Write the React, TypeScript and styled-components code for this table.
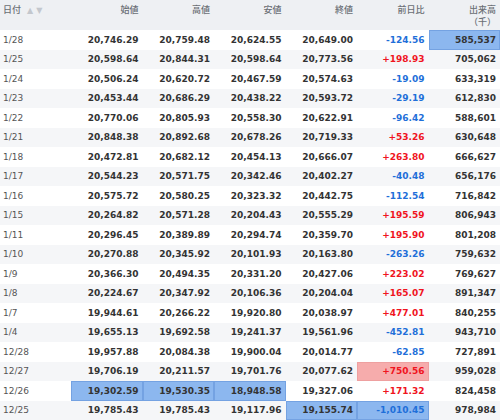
import React from 'react';
import styled, { createGlobalStyle } from 'styled-components';

type Hl = 'blue' | 'red' | undefined;

type Row = {
  date: string;
  open: string;
  high: string;
  low: string;
  close: string;
  change: string;
  volume: string;
  hl?: Partial<Record<'open' | 'high' | 'low' | 'close' | 'change' | 'volume', Hl>>;
};

const rows: Row[] = [
  { date: '1/28', open: '20,746.29', high: '20,759.48', low: '20,624.55', close: '20,649.00', change: '-124.56', volume: '585,537', hl: { volume: 'blue' } },
  { date: '1/25', open: '20,598.64', high: '20,844.31', low: '20,598.64', close: '20,773.56', change: '+198.93', volume: '705,062' },
  { date: '1/24', open: '20,506.24', high: '20,620.72', low: '20,467.59', close: '20,574.63', change: '-19.09', volume: '633,319' },
  { date: '1/23', open: '20,453.44', high: '20,686.29', low: '20,438.22', close: '20,593.72', change: '-29.19', volume: '612,830' },
  { date: '1/22', open: '20,770.06', high: '20,805.93', low: '20,558.30', close: '20,622.91', change: '-96.42', volume: '588,601' },
  { date: '1/21', open: '20,848.38', high: '20,892.68', low: '20,678.26', close: '20,719.33', change: '+53.26', volume: '630,648' },
  { date: '1/18', open: '20,472.81', high: '20,682.12', low: '20,454.13', close: '20,666.07', change: '+263.80', volume: '666,627' },
  { date: '1/17', open: '20,544.23', high: '20,571.75', low: '20,342.46', close: '20,402.27', change: '-40.48', volume: '656,176' },
  { date: '1/16', open: '20,575.72', high: '20,580.25', low: '20,323.32', close: '20,442.75', change: '-112.54', volume: '716,842' },
  { date: '1/15', open: '20,264.82', high: '20,571.28', low: '20,204.43', close: '20,555.29', change: '+195.59', volume: '806,943' },
  { date: '1/11', open: '20,296.45', high: '20,389.89', low: '20,294.74', close: '20,359.70', change: '+195.90', volume: '801,208' },
  { date: '1/10', open: '20,270.88', high: '20,345.92', low: '20,101.93', close: '20,163.80', change: '-263.26', volume: '759,632' },
  { date: '1/9', open: '20,366.30', high: '20,494.35', low: '20,331.20', close: '20,427.06', change: '+223.02', volume: '769,627' },
  { date: '1/8', open: '20,224.67', high: '20,347.92', low: '20,106.36', close: '20,204.04', change: '+165.07', volume: '891,347' },
  { date: '1/7', open: '19,944.61', high: '20,266.22', low: '19,920.80', close: '20,038.97', change: '+477.01', volume: '840,255' },
  { date: '1/4', open: '19,655.13', high: '19,692.58', low: '19,241.37', close: '19,561.96', change: '-452.81', volume: '943,710' },
  { date: '12/28', open: '19,957.88', high: '20,084.38', low: '19,900.04', close: '20,014.77', change: '-62.85', volume: '727,891' },
  { date: '12/27', open: '19,706.19', high: '20,211.57', low: '19,701.76', close: '20,077.62', change: '+750.56', volume: '959,028', hl: { change: 'red' } },
  { date: '12/26', open: '19,302.59', high: '19,530.35', low: '18,948.58', close: '19,327.06', change: '+171.32', volume: '824,458', hl: { open: 'blue', high: 'blue', low: 'blue' } },
  { date: '12/25', open: '19,785.43', high: '19,785.43', low: '19,117.96', close: '19,155.74', change: '-1,010.45', volume: '978,984', hl: { close: 'blue', change: 'blue' } },
];

const GlobalStyle = createGlobalStyle`
  html, body {
    margin: 0;
    padding: 0;
    background: #ffffff;
    overflow: hidden;
  }
  body {
    font-family: "DejaVu Sans", Verdana, "Noto Sans CJK JP", sans-serif;
  }
`;

const Table = styled.div`
  width: 500px;
  height: 420px;
  display: grid;
  grid-template-columns: 71px repeat(6, 1fr);
  grid-template-rows: 30px repeat(20, 19.5px);
  color: #333;
`;

const HeadCell = styled.div<{ $left?: boolean }>`
  background: #eef0f3;
  color: #6b6f75;
  font-family: "Noto Sans CJK JP", sans-serif;
  font-size: 9px;
  font-weight: 500;
  line-height: 12px;
  padding: 4px 4px 0 3px;
  text-align: ${(p) => (p.$left ? 'left' : 'right')};
  display: flex;
  flex-direction: column;
  align-items: ${(p) => (p.$left ? 'flex-start' : 'flex-end')};
`;

const SortArrows = styled.span`
  color: #c3c7cd;
  font-size: 8px;
  margin-left: 6px;
  letter-spacing: 3px;
  font-family: "DejaVu Sans", sans-serif;
`;

const DateCell = styled.div<{ $odd: boolean }>`
  background: ${(p) => (p.$odd ? '#f5f6f8' : '#ffffff')};
  color: #555;
  font-size: 9px;
  display: flex;
  align-items: center;
  padding-left: 3px;
`;

const NumCell = styled.div<{ $odd: boolean; $hl: Hl; $tone?: 'up' | 'down' }>`
  background: ${(p) =>
    p.$hl === 'blue' ? '#8cb7ef' : p.$hl === 'red' ? '#f6acac' : p.$odd ? '#f5f6f8' : '#ffffff'};
  box-shadow: ${(p) =>
    p.$hl === 'blue'
      ? 'inset 0 0 0 1px #74a2e2'
      : p.$hl === 'red'
        ? 'inset 0 0 0 1px #eea0a0'
        : 'none'};
  color: ${(p) => (p.$tone === 'up' ? '#f0141e' : p.$tone === 'down' ? '#1f6fd9' : '#333')};
  font-size: 9px;
  font-weight: 700;
  display: flex;
  align-items: center;
  justify-content: flex-end;
  padding-right: 4px;
`;

const keys = ['open', 'high', 'low', 'close', 'change', 'volume'] as const;

export default function App() {
  return (
    <>
      <GlobalStyle />
      <Table>
        <HeadCell $left>
          <span>
            日付<SortArrows>▲▼</SortArrows>
          </span>
        </HeadCell>
        <HeadCell>始値</HeadCell>
        <HeadCell>高値</HeadCell>
        <HeadCell>安値</HeadCell>
        <HeadCell>終値</HeadCell>
        <HeadCell>前日比</HeadCell>
        <HeadCell>
          <span>出来高</span>
          <span>（千）</span>
        </HeadCell>
        {rows.map((r, i) => (
          <React.Fragment key={r.date}>
            <DateCell $odd={i % 2 === 1}>{r.date}</DateCell>
            {keys.map((k) => (
              <NumCell
                key={k}
                $odd={i % 2 === 1}
                $hl={r.hl?.[k]}
                $tone={k === 'change' ? (r.change.startsWith('+') ? 'up' : 'down') : undefined}
              >
                {r[k]}
              </NumCell>
            ))}
          </React.Fragment>
        ))}
      </Table>
    </>
  );
}
